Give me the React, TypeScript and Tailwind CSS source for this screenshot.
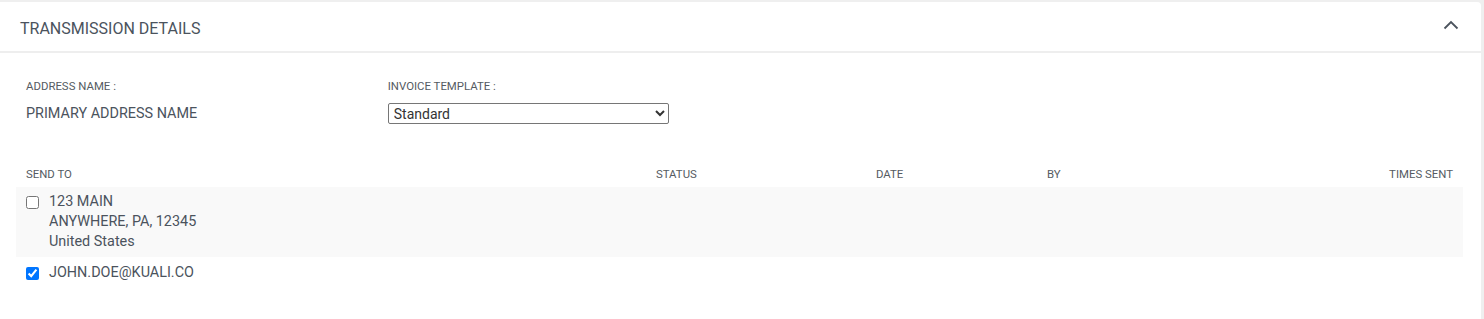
import React from "react";

export default function App() {
  const font = { fontFamily: "Roboto, 'Liberation Sans', sans-serif" };
  return (
    <div className="min-h-[319px] bg-[#efefef] pt-[2px] pr-[3px]" style={font}>
      <div className="min-h-[317px] rounded-tr-[4px] bg-white">
        <div className="flex h-[51px] items-center justify-between border-b-2 border-[#eeeeee] pt-[5px] pl-[20px] pr-[22px]">
          <h2 className="text-[16px] font-normal text-[#4b535d]">TRANSMISSION DETAILS</h2>
          <svg width="16" height="10" viewBox="0 0 16 10" className="mb-[9px]">
            <path d="M1.5 8.5 L8 2 L14.5 8.5" fill="none" stroke="#4b535d" strokeWidth="1.8" />
          </svg>
        </div>
        <div className="pl-[16px] pr-[18px] pt-[27px]">
          <div className="grid grid-cols-4">
            <div className="px-[10px]">
              <div className="text-[11.4px] leading-[13px] text-[#555b62]">ADDRESS NAME :</div>
              <div className="mt-[12px] text-[14.4px] leading-[17px] text-[#4b535d]">PRIMARY ADDRESS NAME</div>
            </div>
            <div className="px-[10px]">
              <div className="text-[11.4px] leading-[13px] text-[#555b62]">INVOICE TEMPLATE :</div>
              <select
                className="mt-[10px] h-[21px] w-[281px] rounded-[2px] border border-[#767676] bg-white pl-[1px] text-[14px] text-[#333]"
                style={font}
                defaultValue="Standard"
              >
                <option>Standard</option>
              </select>
            </div>
          </div>
          <div className="mt-[42px]">
            <div className="grid grid-cols-[630px_220px_171px_1fr_200px] text-[11.4px] leading-[13px] text-[#555b62]">
              <div className="px-[10px]">SEND TO</div>
              <div className="px-[10px]">STATUS</div>
              <div className="px-[10px]">DATE</div>
              <div className="px-[10px]">BY</div>
              <div className="px-[10px] text-right">TIMES SENT</div>
            </div>
            <div className="mt-[6px] grid grid-cols-[630px_220px_171px_1fr_200px] bg-[#f9f9f9] text-[14.4px] leading-[20px] text-[#4b535d]">
              <div className="flex items-start gap-[10px] px-[10px] pt-[5px] pb-[5px]">
                <input type="checkbox" className="mt-[4px] h-[13px] w-[13px]" />
                <div>
                  <div>123 MAIN</div>
                  <div>ANYWHERE, PA, 12345</div>
                  <div>United States</div>
                </div>
              </div>
              <div />
              <div />
              <div />
              <div />
            </div>
            <div className="grid grid-cols-[630px_220px_171px_1fr_200px] text-[14.4px] leading-[20px] text-[#4b535d]">
              <div className="flex items-start gap-[10px] px-[10px] pt-[6px]">
                <input type="checkbox" defaultChecked className="mt-[4px] h-[13px] w-[13px]" />
                <div>JOHN.DOE@KUALI.CO</div>
              </div>
            </div>
          </div>
        </div>
      </div>
    </div>
  );
}
